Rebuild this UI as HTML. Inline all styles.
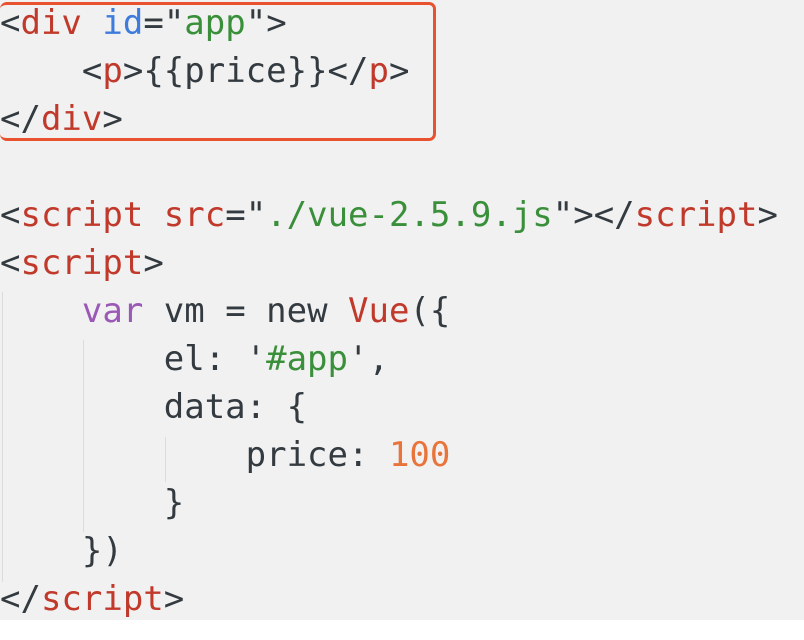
<!DOCTYPE html>
<html><head><style>
html,body{margin:0;padding:0;}
body{width:804px;height:640px;background:#fff;position:relative;overflow:hidden;}
.bg{position:absolute;left:0;top:0;width:804px;height:620px;background:#f1f1f1;}
pre{position:absolute;left:0;top:-1px;margin:0;font-family:"DejaVu Sans Mono","Liberation Mono",monospace;font-size:34px;line-height:48px;color:#333a40;}
.t{color:#c0392b}.a{color:#3e7bdc}.s{color:#3a8f3a}.k{color:#9b59b6}.n{color:#e8743b}
.box{position:absolute;left:0;top:2px;width:436px;height:139px;border:3px solid #e8522f;border-radius:7px;box-sizing:border-box;border-left:none;}
.g{position:absolute;width:1px;background:#dcdcdc;}
</style></head><body>
<div class="bg"></div>
<div class="g" style="left:2px;top:292px;height:290px"></div>
<div class="g" style="left:83px;top:340px;height:192px"></div>
<div class="g" style="left:165px;top:437px;height:45px"></div>
<pre>&lt;<span class="t">div</span> <span class="a">id</span>="<span class="s">app</span>"&gt;
    &lt;<span class="t">p</span>&gt;{{price}}&lt;/<span class="t">p</span>&gt;
&lt;/<span class="t">div</span>&gt;

&lt;<span class="t">script</span> <span class="t">src</span>="<span class="s">./vue-2.5.9.js</span>"&gt;&lt;/<span class="t">script</span>&gt;
&lt;<span class="t">script</span>&gt;
    <span class="k">var</span> vm = new <span class="t">Vue</span>({
        el: '<span class="s">#app</span>',
        data: {
            price: <span class="n">100</span>
        }
    })
&lt;/<span class="t">script</span>&gt;</pre>
<div class="box"></div>
</body></html>
